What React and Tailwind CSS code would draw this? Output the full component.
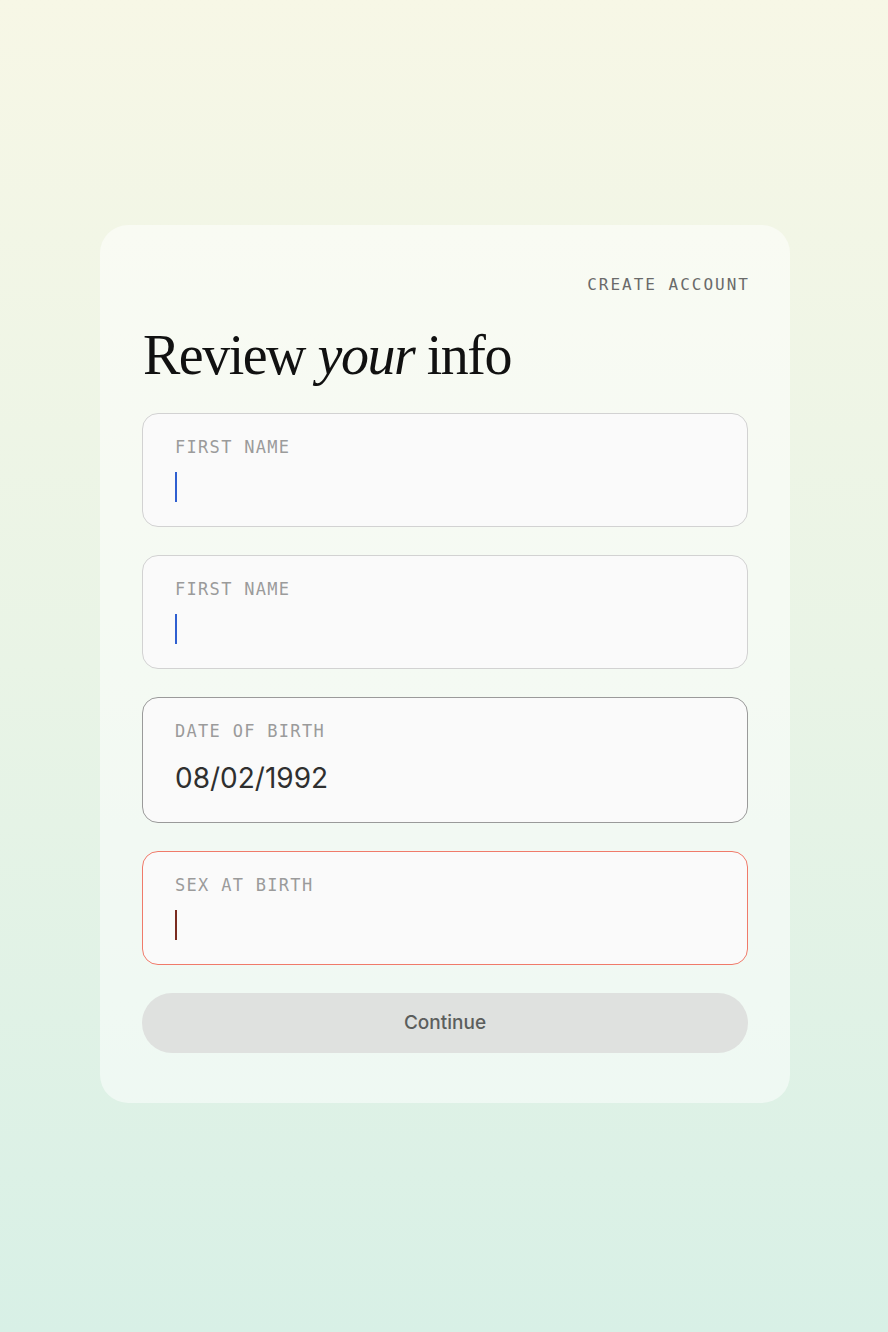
const mono = "font-['DejaVu_Sans_Mono','Liberation_Mono',monospace]";

function Field({ label, tone = "idle", value, caret = "bg-[#2f5fd0]" }) {
  const border =
    tone === "error"
      ? "border-[#f07a6a]"
      : tone === "filled"
      ? "border-[#9a9a9a]"
      : "border-[#d2d2d2]";
  return (
    <div
      className={`rounded-[16px] border bg-[#fafafa] px-8 pt-[21px] ${border} ${
        tone === "filled" ? "h-[126px]" : "h-[114px]"
      }`}
    >
      <div className={`${mono} text-[17px] leading-6 tracking-[1.3px] text-[#9b9b9b]`}>
        {label}
      </div>
      {value ? (
        <div className="mt-[17px] font-['Inter',sans-serif] text-[28px] leading-9 text-[#2f2f2f]">
          {value}
        </div>
      ) : (
        <div className={`mt-[13px] h-[30px] w-[2px] ${caret}`} />
      )}
    </div>
  );
}

export default function App() {
  return (
    <div className="min-h-screen flex items-center justify-center pb-[4px] pl-[2px] bg-gradient-to-b from-[#f7f7e6] via-[#e9f4e6] to-[#d8f0e6]">
      <div className="w-[690px] rounded-[28px] bg-white/50 px-[42px] pt-[50px] pb-[50px]">
        <div className={`${mono} flex justify-end -mr-[2px] text-[16px] leading-5 tracking-[2px] text-[#6a6a6a]`}>
          CREATE ACCOUNT
        </div>

        <h1 className="mt-[32px] pl-px font-['Liberation_Serif',serif] text-[56px] leading-[56px] tracking-[-1.5px] text-[#111]">
          Review <em>your</em> info
        </h1>

        <div className="mt-[30px] flex flex-col gap-[28px]">
          <Field label="FIRST NAME" />
          <Field label="FIRST NAME" />
          <Field label="DATE OF BIRTH" tone="filled" value="08/02/1992" />
          <Field label="SEX AT BIRTH" tone="error" caret="bg-[#7a2b1f]" />
          <button
            type="button"
            className="h-[60px] w-full rounded-full bg-[#dfe1df] font-['Inter',sans-serif] text-[19px] font-medium text-[#5b5e5c]"
          >
            Continue
          </button>
        </div>
      </div>
    </div>
  );
}
